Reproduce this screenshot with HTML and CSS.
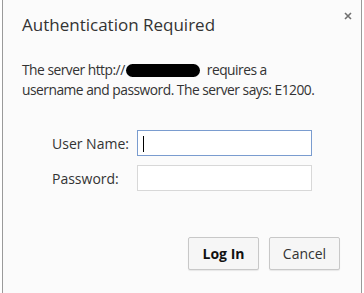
FILE: index.html
```html
<!DOCTYPE html>
<html lang="en">
<head>
  <meta charset="UTF-8">
  <title>Authentication Required</title>
  <link rel="stylesheet" href="styles.css">
</head>
<body>

<div class="dialog">
  <div class="header">
    <h1>Authentication Required</h1>
    <svg class="close" width="8" height="8" viewBox="0 0 8 8">
      <path d="M1 1 L7 7 M7 1 L1 7" stroke="#707070" stroke-width="1.6" fill="none"/>
    </svg>
  </div>

  <p class="message">The server http://<span class="redacted"></span> requires a<br>username and password. The server says: E1200.</p>

  <div class="fields">
    <label for="user">User Name:</label>
    <div class="input focused" id="user"><span class="caret"></span></div>
    <label for="pass">Password:</label>
    <div class="input" id="pass"></div>
  </div>

  <div class="buttons">
    <button class="btn primary">Log In</button>
    <button class="btn">Cancel</button>
  </div>
</div>

</body>
</html>
```

FILE: styles.css
```css
html, body {
  margin: 0;
  background-color: #fff;
}

body {
  font-family: 'Open Sans', 'Noto Sans', Arial, sans-serif;
  color: #333;
  padding: 0 2px 0 2px;
}

.dialog {
  box-sizing: border-box;
  height: 293px;
  background-color: #fbfbfb;
  border-left: 1px solid #9a9a9a;
  border-right: 1px solid #9a9a9a;
  padding: 12px 9px 0 19px;
}

.header {
  display: flex;
  justify-content: space-between;
  align-items: flex-start;
}

h1 {
  font-size: 17px;
  font-weight: normal;
  margin: 1px 0 0 0;
}

.close {
  margin-top: 0;
}

.message {
  font-size: 13.8px;
  line-height: 20px;
  margin: 24px 0 0 0;
  letter-spacing: -0.5px;
  white-space: nowrap;
}

.redacted {
  display: inline-block;
  width: 74px;
  height: 13px;
  background-color: #000;
  border-radius: 7px;
  vertical-align: -2px;
  margin: 0 4px 0 1px;
}

.fields {
  display: grid;
  grid-template-columns: 85px 175px;
  row-gap: 9px;
  align-items: center;
  margin: 30px 0 0 30px;
  font-size: 14px;
}

.input {
  box-sizing: border-box;
  height: 26px;
  background-color: #fff;
  border: 1px solid #d8d8d8;
}

.input.focused {
  border-color: #7a9ccf;
  padding: 5px 0 0 5px;
}

.caret {
  display: block;
  width: 1px;
  height: 16px;
  background-color: #000;
}

.buttons {
  display: flex;
  justify-content: flex-end;
  gap: 10px;
  margin: 46px 12px 0 0;
}

.btn {
  box-sizing: border-box;
  width: 71px;
  height: 33px;
  font-family: 'Open Sans', 'Noto Sans', Arial, sans-serif;
  font-size: 14px;
  color: #333;
  background-color: #f6f6f6;
  border: 1px solid #c8c8c8;
  border-radius: 2px;
  box-shadow: 0 1px 1px rgba(0,0,0,0.08);
}

.btn.primary {
  font-weight: bold;
  color: #111;
}
```
